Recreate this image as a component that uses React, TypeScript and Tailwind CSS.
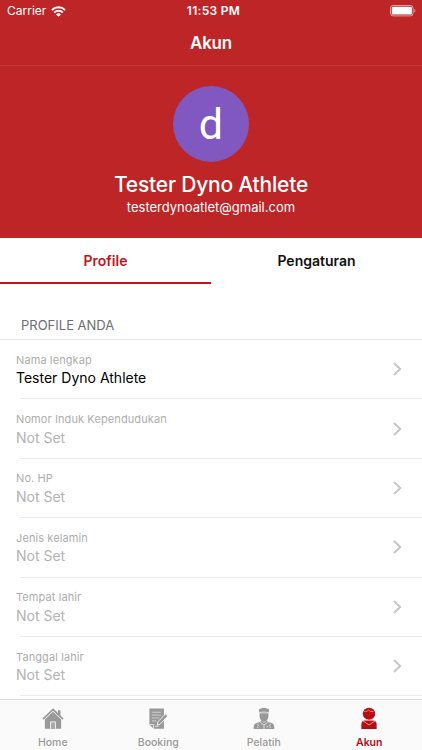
import type { ReactNode } from 'react'

const fields = [
  { label: 'Nama lengkap', value: 'Tester Dyno Athlete' },
  { label: 'Nomor Induk Kependudukan', value: '' },
  { label: 'No. HP', value: '' },
  { label: 'Jenis kelamin', value: '' },
  { label: 'Tempat lahir', value: '' },
  { label: 'Tanggal lahir', value: '' },
]

function WifiIcon() {
  return (
    <svg width="15" height="11" viewBox="0 0 15 11" fill="none" stroke="#fff" strokeWidth="2">
      <path d="M.9 4.100a9.300 9.300 0 0 1 13.200 0" />
      <path d="M3.200 6.600a6.100 6.100 0 0 1 8.600 0" />
      <path d="M7.500 10.800 5 8.400a3.600 3.600 0 0 1 5 0z" fill="#fff" stroke="none" />
    </svg>
  )
}

function BatteryIcon() {
  return (
    <svg width="26" height="12" viewBox="0 0 26 12">
      <rect x=".5" y=".5" width="22.6" height="10.4" rx="2.6" fill="none" stroke="#fff" strokeOpacity=".55" />
      <rect x="1.8" y="1.8" width="20" height="7.8" rx="1.2" fill="#fff" />
      <path d="M24.3 3.9v3.6c1.6-.6 1.6-3 0-3.6z" fill="#fff" fillOpacity=".55" />
    </svg>
  )
}

function HomeIcon() {
  return (
    <svg width="24" height="24" viewBox="0 0 24 24" fill="#999">
      <path d="M12 1.200 1 12l1.200 1.200L12 3.900l9.800 9.300L23 12l-3.200-3.100V3.500h-2.600v2.800z" />
      <path d="M12 5 3.500 13v9.800h17V13z" />
      <path d="M9.500 22.800V15.500h5v7.300" fill="#a8a8a8" stroke="#f4f4f4" strokeWidth="1" />
    </svg>
  )
}

function BookingIcon() {
  return (
    <svg width="24" height="24" viewBox="0 0 24 24">
      <path d="M3 1.500h15.200v21.200H7.500L3 18.500z" fill="#999" />
      <path d="M5.500 5.500h9.500M5.500 8.500h9.500M5.500 11.500h8M5.500 14.500h5" stroke="#ddd" strokeWidth=".8" />
      <path d="M3 18.300h4.500v4.400" fill="none" stroke="#f8f8f8" strokeWidth=".8" />
      <path d="m11.200 19 .7-3.500 7.800-8.300 2.500 2.200-7.800 8.400z" fill="#999" stroke="#f8f8f8" strokeWidth=".9" />
      <path d="M9 20.300c2-1.300 2 .8 4-.3" fill="none" stroke="#f8f8f8" strokeWidth=".7" />
    </svg>
  )
}

function CoachIcon() {
  return (
    <svg width="24" height="24" viewBox="0 0 24 24" fill="#999">
      <path d="M6.500 2.800C8 .6 16 .6 17.500 2.800l-.8 3.200H7.300z" />
      <path d="M7.400 6.400h9.200v2.700c0 3.600-2.200 6.400-4.600 6.400s-4.600-2.800-4.600-6.400z" />
      <path d="M7.200 6c3-1 6.600-1 9.600 0" fill="none" stroke="#eee" strokeWidth=".7" />
      <path d="M8.800 13.700 12 16.500l3.200-2.800c0 1.500 1 2 3 2.500 3.800.8 4.600 2 4.600 6.800H1.200c0-4.800.8-6 4.600-6.800 2-.5 3-1 3-2.500z" />
      <path d="m8 16 4 2.800L16 16M12 18.800V23M5 17.500l2 2.500M19 17.500l-2 2.500" fill="none" stroke="#eee" strokeWidth=".8" />
      <circle cx="15.200" cy="20.500" r=".7" fill="#eee" />
      <circle cx="5.500" cy="21" r=".7" fill="#eee" />
      <circle cx="18.500" cy="21" r=".7" fill="#eee" />
    </svg>
  )
}

function AccountIcon() {
  return (
    <svg width="24" height="24" viewBox="0 0 24 24" fill="#b90d12">
      <ellipse cx="12" cy="7.100" rx="6.500" ry="6.300" />
      <path d="M7 4.600c2.200.4 3.500-.4 4.400-1.500 1.200 1.300 2.800 1.700 5.300 1.700" fill="none" stroke="#f0c4c5" strokeWidth=".7" />
      <path d="M8 14.200h8c2.700 0 4 1.500 4 4.200V23H4v-4.600c0-2.700 1.300-4.200 4-4.200z" />
      <path d="m5.500 14.300 6.500 4.500 6.500-4.500" fill="none" stroke="#f0c4c5" strokeWidth=".8" />
    </svg>
  )
}

function TabItem({ icon, label, active }: { icon: ReactNode; label: string; active?: boolean }) {
  return (
    <div className="flex flex-1 flex-col items-center pt-[7px]">
      {icon}
      <span
        className={`mt-[6px] text-[10.5px] leading-[14px] ${
          active ? 'font-semibold text-[#b90d12]' : 'font-medium text-[#999]'
        }`}
      >
        {label}
      </span>
    </div>
  )
}

export default function App() {
  return (
    <div className="flex h-[750px] w-[422px] flex-col overflow-hidden bg-white font-['Inter',sans-serif]">
      {/* Header */}
      <header className="h-[238px] shrink-0 bg-[#be2526] text-white">
        <div className="grid h-[22px] grid-cols-3 items-center pr-[6px] pl-[7px]">
          <div className="flex items-center gap-[5px]">
            <span className="text-[12px] leading-[22px]">Carrier</span>
            <WifiIcon />
          </div>
          <span className="pl-1 text-center text-[12px] leading-[22px] font-semibold tracking-[0.3px]">11:53 PM</span>
          <div className="flex justify-end">
            <BatteryIcon />
          </div>
        </div>
        <div className="flex h-[44px] items-center justify-center border-b border-[#c63738]">
          <h1 className="text-[17px] font-semibold tracking-[-0.2px]">Akun</h1>
        </div>
        <div className="flex flex-col items-center pt-5">
          <div className="flex size-[76px] items-center justify-center rounded-full bg-[#8158c0] pt-px font-['Roboto',sans-serif] text-[43px] leading-none">
            d
          </div>
          <div className="mt-[9px] text-[21px] leading-[28px] font-medium tracking-[-0.2px]">Tester Dyno Athlete</div>
          <div className="-mt-px text-[13px] leading-[18px]">testerdynoatlet@gmail.com</div>
        </div>
      </header>

      {/* Tabs */}
      <div className="flex h-[46px] shrink-0 text-[14px] font-semibold">
        <div className="flex flex-1 items-center justify-center border-b-2 border-[#c0151a] text-[#c0151a]">Profile</div>
        <div className="flex flex-1 items-center justify-center border-b-2 border-transparent text-[#111]">Pengaturan</div>
      </div>

      {/* Profile fields */}
      <main className="min-h-0 flex-1 overflow-hidden">
        <div className="flex h-[56px] items-end border-b border-[#e9e9eb] pb-[5px] pl-[21px] text-[13px] leading-[18px] text-[#6d6d72]">
          PROFILE ANDA
        </div>
        {fields.map((field) => (
          <div key={field.label} className="h-[59.400px]">
            <div className="flex h-[58.400px] items-center justify-between pr-[20px] pl-4">
              <div className="pt-[1.500px]">
                <div className="text-[11px] leading-[16px] tracking-[0.1px] text-[#adadad]">{field.label}</div>
                <div className={`pt-[0.500px] text-[14px] leading-[20px] ${field.value ? 'text-black' : 'text-[#b3b3b3]'}`}>
                  {field.value || 'Not Set'}
                </div>
              </div>
              <svg width="9" height="14" viewBox="0 0 9 14" fill="none" stroke="#c4c4c7" strokeWidth="1.800">
                <path d="m1 1 6.300 6L1 13" />
              </svg>
            </div>
            <div className="ml-5 h-px bg-[#ebebed]" />
          </div>
        ))}
      </main>

      {/* Bottom navigation */}
      <nav className="flex h-[51px] shrink-0 border-t border-[#dcdcdc] bg-[#fafafa]">
        <TabItem icon={<HomeIcon />} label="Home" />
        <TabItem icon={<BookingIcon />} label="Booking" />
        <TabItem icon={<CoachIcon />} label="Pelatih" />
        <TabItem icon={<AccountIcon />} label="Akun" active />
      </nav>
    </div>
  )
}
